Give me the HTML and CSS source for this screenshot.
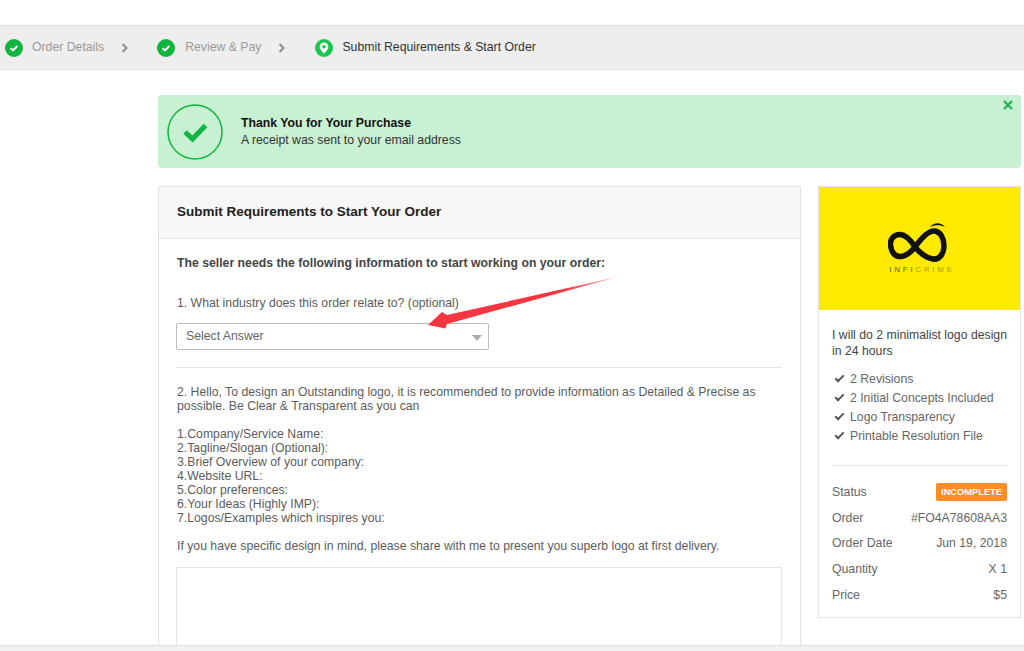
FILE: index.html
```html
<!DOCTYPE html>
<html lang="en">
<head>
  <meta charset="UTF-8" />
  <title>Submit Requirements</title>
  <link rel="stylesheet" href="styles.css">
</head>
<body>
  <div class="steps">
    <div class="step done">
      <svg class="step-icon" viewBox="0 0 18 18"><circle cx="9" cy="9" r="9" fill="#0fb53f"/><path d="M5.600 9.200l2.400 2.200 4.300-4.400" fill="none" stroke="#fff" stroke-width="2"/></svg>
      <span>Order Details</span>
      <svg class="step-arrow" viewBox="0 0 8 10"><path d="M1.500 1l4 4-4 4" fill="none" stroke="#8c8c8c" stroke-width="2"/></svg>
    </div>
    <div class="step done second">
      <svg class="step-icon" viewBox="0 0 18 18"><circle cx="9" cy="9" r="9" fill="#0fb53f"/><path d="M5.600 9.200l2.400 2.200 4.300-4.400" fill="none" stroke="#fff" stroke-width="2"/></svg>
      <span>Review &amp; Pay</span>
      <svg class="step-arrow" viewBox="0 0 8 10"><path d="M1.500 1l4 4-4 4" fill="none" stroke="#8c8c8c" stroke-width="2"/></svg>
    </div>
    <div class="step current">
      <svg class="step-icon" viewBox="0 0 18 18"><circle cx="9" cy="9" r="9" fill="#1cc850"/><path fill-rule="evenodd" d="M9 3.400a4.300 4.300 0 0 1 4.300 4.300c0 2.800-4.300 6.900-4.300 6.900S4.700 10.500 4.700 7.700A4.300 4.300 0 0 1 9 3.400zM9 5.900a1.800 1.800 0 1 0 0 3.600 1.800 1.800 0 0 0 0-3.600z" fill="#fff"/></svg>
      <span>Submit Requirements &amp; Start Order</span>
    </div>
  </div>

  <div class="content">
    <div class="alert">
      <svg class="alert-icon" viewBox="0 0 56 56"><circle cx="28" cy="28" r="27" fill="none" stroke="#12b53f" stroke-width="1.500"/><path d="M18 28l7.500 7L38.500 21.500" fill="none" stroke="#12b53f" stroke-width="5"/></svg>
      <div class="alert-text">
        <strong>Thank You for Your Purchase</strong>
        <span>A receipt was sent to your email address</span>
      </div>
      <svg class="alert-close" viewBox="0 0 10 10"><path d="M1 1l8 8M9 1l-8 8" stroke="#12b053" stroke-width="2"/></svg>
    </div>

    <div class="columns">
      <div class="panel">
        <div class="panel-head">Submit Requirements to Start Your Order</div>
        <div class="panel-body">
          <p class="intro">The seller needs the following information to start working on your order:</p>
          <p class="question">1. What industry does this order relate to? (optional)</p>
          <div class="select">
            <span>Select Answer</span>
            <i class="caret"></i>
          </div>
          <hr class="divider">
          <p class="text">2. Hello, To design an Outstanding logo, it is recommended to provide information as Detailed &amp; Precise as possible. Be Clear &amp; Transparent as you can</p>
          <p class="text">1.Company/Service Name:<br>2.Tagline/Slogan (Optional):<br>3.Brief Overview of your company:<br>4.Website URL:<br>5.Color preferences:<br>6.Your Ideas (Highly IMP):<br>7.Logos/Examples which inspires you:</p>
          <p class="text">If you have specific design in mind, please share with me to present you superb logo at first delivery.</p>
          <div class="answer"></div>
        </div>
      </div>

      <div class="side">
        <div class="cover">
          <svg class="cover-logo" viewBox="0 0 60 44">
            <path d="M27 25C22 17 17 12 11 12.500 5 13 2 18 2.500 23 3 30 7 35 13 34.500 19 34 23 30 27 25 32 18 40 8 47 9 53 10 56 17 56 24 56 32 51 38 45 37 38 36 32 31 27 25z" fill="none" stroke="#111" stroke-width="5.500"/>
            <path d="M42 5C46 0 53 0 57 5 52 2.500 47 2.500 42 5z" fill="#111"/>
          </svg>
          <div class="cover-name">INFI<b>CRIME</b></div>
        </div>
        <div class="side-body">
          <p class="gig-title">I will do 2 minimalist logo design in 24 hours</p>
          <ul class="features">
            <li>2 Revisions</li>
            <li>2 Initial Concepts Included</li>
            <li>Logo Transparency</li>
            <li>Printable Resolution File</li>
          </ul>
          <div class="meta">
            <div class="meta-row status-row"><span>Status</span><span class="badge">INCOMPLETE</span></div>
            <div class="meta-row"><span>Order</span><span>#FO4A78608AA3</span></div>
            <div class="meta-row"><span>Order Date</span><span>Jun 19, 2018</span></div>
            <div class="meta-row"><span>Quantity</span><span>X 1</span></div>
            <div class="meta-row"><span>Price</span><span>$5</span></div>
          </div>
        </div>
      </div>
    </div>
  </div>

  <!-- red arrow drawn over the screenshot -->
  <svg class="red-arrow" viewBox="0 0 200 60">
    <defs>
      <linearGradient id="arrowFade" x1="0" x2="1" y1="0" y2="0">
        <stop offset="0.700" stop-color="#f5353f"/>
        <stop offset="1" stop-color="#fbb0b0"/>
      </linearGradient>
    </defs>
    <path d="M191 0L21 38 16 35 2 48 19.500 51.500 21 47z" fill="url(#arrowFade)"/>
  </svg>

  <div class="bottom-bar"></div>
</body>
</html>
```

FILE: styles.css
```css
html, body {
  height: 651px;
  overflow: hidden;
}
body {
  margin: 0;
  padding-top: 25px;
  box-sizing: border-box;
  position: relative;
  font-family: "Liberation Sans", Arial, sans-serif;
  font-size: 12.25px;
  line-height: 14px;
  color: #5c5c5c;
  background: #fff;
}
p {
  margin: 0;
}
.steps {
  display: flex;
  align-items: center;
  height: 45px;
  box-sizing: border-box;
  padding-left: 5px;
  background: #eee;
  border-top: 1px solid #e0e0e0;
  border-bottom: 1px solid #e0e0e0;
}
.step {
  display: flex;
  align-items: center;
}
.step-icon {
  width: 18px;
  height: 18px;
  margin-right: 9px;
}
.step span {
  padding-bottom: 2px;
  color: #999;
}
.step.second span {
  margin-left: 1px;
}
.step.current span {
  color: #333;
}
.step-arrow {
  width: 8px;
  height: 10px;
  margin-left: 17px;
  margin-right: 28px;
}
.step.current {
  margin-left: 1px;
}
.content {
  margin-left: 158px;
  margin-right: 3px;
  padding-top: 25px;
}
.alert {
  position: relative;
  display: flex;
  align-items: center;
  height: 73px;
  box-sizing: border-box;
  padding-left: 9px;
  background: #c8f0d2;
  border-radius: 4px;
}
.alert-icon {
  width: 56px;
  height: 56px;
  margin-right: 18px;
}
.alert-text {
  display: flex;
  flex-direction: column;
  gap: 3px;
  color: #333;
}
.alert-text strong {
  color: #111;
}
.alert-close {
  position: absolute;
  top: 5px;
  right: 8px;
  width: 10px;
  height: 10px;
}
.columns {
  display: flex;
  align-items: flex-start;
  gap: 17px;
  margin-top: 18px;
}
.panel {
  width: 643px;
  flex-shrink: 0;
  box-sizing: border-box;
  border: 1px solid #e3e3e3;
  border-bottom: 0;
}
.panel-head {
  height: 52px;
  box-sizing: border-box;
  padding: 18px 18px 0;
  background: #f7f7f7;
  border-bottom: 1px solid #e3e3e3;
  font-size: 13.5px;
  font-weight: bold;
  color: #222;
}
.panel-body {
  padding: 17px 18px 0 18px;
}
.intro {
  font-weight: bold;
  color: #444;
  margin-bottom: 26px;
}
.question {
  margin-bottom: 13px;
}
.select {
  display: flex;
  align-items: center;
  justify-content: space-between;
  width: 313px;
  height: 27px;
  margin-left: -1px;
  box-sizing: border-box;
  padding: 0 6px 2px 9px;
  border: 1px solid #bbb;
  border-radius: 2px;
  color: #666;
}
.caret {
  width: 0;
  height: 0;
  margin-top: 4px;
  border-left: 5px solid transparent;
  border-right: 5px solid transparent;
  border-top: 6px solid #aaa;
}
.divider {
  height: 1px;
  margin: 17px 0 17px -1px;
  border: 0;
  background: #e5e5e5;
}
.text {
  margin-bottom: 14px;
}
.answer {
  height: 83px;
  margin-left: -1px;
  border: 1px solid #e5e5e5;
}
.side {
  width: 203px;
  box-sizing: border-box;
  border: 1px solid #e3e3e3;
}
.cover {
  display: flex;
  flex-direction: column;
  align-items: center;
  height: 123px;
  box-sizing: border-box;
  padding-top: 35px;
  background: #fdea00;
}
.cover-logo {
  width: 60px;
  height: 44px;
  margin-right: 3px;
}
.cover-name {
  margin-left: 5px;
  font-size: 7.5px;
  line-height: 8px;
  letter-spacing: 3px;
  color: #555;
}
.cover-name b {
  font-weight: normal;
  color: #a89c10;
}
.side-body {
  padding: 17px 13px 10px;
}
.gig-title {
  line-height: 16px;
  color: #444;
}
.features {
  list-style: none;
  margin: 11px 0 0;
  padding: 0 0 19px;
  border-bottom: 1px solid #e5e5e5;
}
.features li {
  position: relative;
  height: 19px;
  line-height: 19px;
  padding-left: 18px;
  color: #666;
}
.features li::before {
  content: "";
  position: absolute;
  left: 3px;
  top: 5px;
  width: 7px;
  height: 3px;
  border-left: 2px solid #555;
  border-bottom: 2px solid #555;
  transform: rotate(-45deg);
}
.meta {
  padding: 12px 0 0;
}
.meta-row {
  display: flex;
  align-items: center;
  justify-content: space-between;
  height: 25.6px;
  color: #666;
}
.status-row {
  height: 27px;
}
.badge {
  padding: 0 5px;
  height: 18px;
  line-height: 18px;
  background: #ff8c26;
  border-radius: 2px;
  color: #fff;
  font-size: 9.3px;
  font-weight: bold;
}
.red-arrow {
  position: absolute;
  left: 426px;
  top: 277px;
  width: 200px;
  height: 60px;
}
.bottom-bar {
  position: fixed;
  left: 0;
  right: 0;
  bottom: 0;
  height: 5px;
  background: #f1f1f1;
  border-top: 1px solid #e3e3e3;
}
```
